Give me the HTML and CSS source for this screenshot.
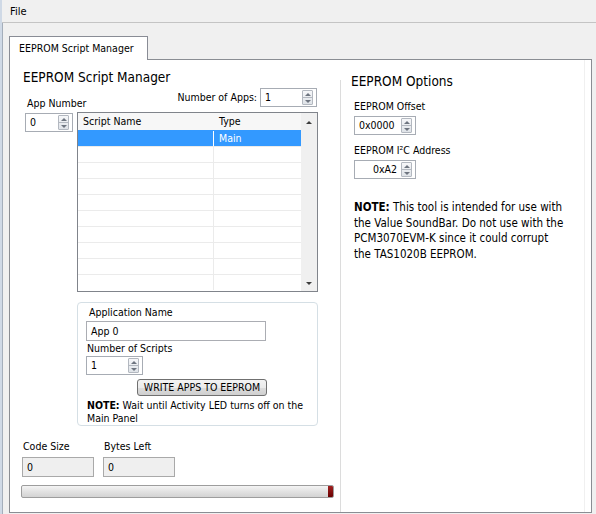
FILE: index.html
```html
<!DOCTYPE html>
<html>
<head>
<meta charset="utf-8">
<title>EEPROM Script Manager</title>
<link rel="stylesheet" href="styles.css">
</head>
<body>
<div class="window">
  <div class="menubar"><span class="menu-item">File</span></div>
  <div class="tabstrip"><div class="tab">EEPROM Script Manager</div></div>
  <div class="panel">
    <section class="left">
      <h1 class="title">EEPROM Script Manager</h1>
      <div class="top-row">
        <div class="label app-label">App Number</div>
        <div class="num-apps">
          <span class="label">Number of Apps:</span>
          <div class="spin w56"><span class="val">1</span><span class="btns"><i class="up"></i><i class="dn"></i></span></div>
        </div>
      </div>
      <div class="main-row">
        <div class="spin w48 appnum"><span class="val">0</span><span class="btns"><i class="up"></i><i class="dn"></i></span></div>
        <div class="table">
          <div class="grid">
            <div class="thead"><span class="c1">Script Name</span><span class="c2">Type</span></div>
            <div class="row sel"><span class="c1"></span><span class="c2">Main</span></div>
            <div class="row"><span class="c1"></span><span class="c2"></span></div>
            <div class="row"><span class="c1"></span><span class="c2"></span></div>
            <div class="row"><span class="c1"></span><span class="c2"></span></div>
            <div class="row"><span class="c1"></span><span class="c2"></span></div>
            <div class="row"><span class="c1"></span><span class="c2"></span></div>
            <div class="row"><span class="c1"></span><span class="c2"></span></div>
            <div class="row"><span class="c1"></span><span class="c2"></span></div>
            <div class="row"><span class="c1"></span><span class="c2"></span></div>
            <div class="row last"><span class="c1"></span><span class="c2"></span></div>
          </div>
          <div class="vscroll"><span class="arr-up"></span><span class="arr-dn"></span></div>
        </div>
      </div>
      <div class="group">
        <div class="label glabel">Application Name</div>
        <div class="textbox">App 0</div>
        <div class="label slabel">Number of Scripts</div>
        <div class="spin w57 scripts"><span class="val">1</span><span class="btns"><i class="up"></i><i class="dn"></i></span></div>
        <button class="btn">WRITE APPS TO EEPROM</button>
        <p class="gnote"><b>NOTE:</b> Wait until Activity LED turns off on the<br>Main Panel</p>
      </div>
      <div class="counts">
        <div class="count">
          <div class="label">Code Size</div>
          <div class="indicator">0</div>
        </div>
        <div class="count">
          <div class="label">Bytes Left</div>
          <div class="indicator">0</div>
        </div>
      </div>
      <div class="progress"><div class="fill"></div><div class="cap"></div></div>
    </section>
    <div class="divider"></div>
    <section class="right">
      <h2 class="opt-title">EEPROM Options</h2>
      <div class="label olabel">EEPROM Offset</div>
      <div class="spin w62 ospin"><span class="val">0x0000</span><span class="btns"><i class="up"></i><i class="dn"></i></span></div>
      <div class="label olabel second">EEPROM I²C Address</div>
      <div class="spin w62 ospin"><span class="val right-val">0xA2</span><span class="btns"><i class="up"></i><i class="dn"></i></span></div>
      <p class="onote"><b>NOTE:</b> This tool is intended for use with<br>the Value SoundBar. Do not use with the<br>PCM3070EVM-K since it could corrupt<br>the TAS1020B EEPROM.</p>
    </section>
  </div>
</div>
</body>
</html>
```

FILE: styles.css
```css
* { box-sizing: border-box; }

html, body {
  margin: 0;
  padding: 0;
}

body {
  width: 596px;
  height: 514px;
  overflow: hidden;
  background: #f0f0f0;
  font-family: "DejaVu Sans Condensed", "DejaVu Sans", sans-serif;
  font-stretch: semi-condensed;
  font-size: 10.5px;
  color: #000;
}

.window {
  height: 514px;
  border-left: 2px solid #cfd9e6;
  box-shadow: inset 1px 0 0 #a4aebb;
}

/* menu */
.menubar {
  height: 23px;
  border-bottom: 1px solid #c4c4c4;
  display: flex;
  align-items: center;
  padding-left: 8px;
  font-size: 11px;
  background: #f0f0f0;
}

/* tabs */
.tabstrip {
  height: 36px;
  padding-left: 7px;
  display: flex;
  align-items: flex-end;
}

.tab {
  width: 139px;
  height: 24px;
  margin-bottom: -1px;
  border: 1px solid #898c95;
  border-bottom: none;
  background: #fff;
  padding-left: 9px;
  line-height: 22px;
  font-size: 10.5px;
  position: relative;
  z-index: 1;
}

.panel {
  margin-left: 7px;
  width: 583px;
  height: 454px;
  border: 1px solid #8a8d93;
  background: #fff;
  display: flex;
}

.label {
  line-height: 13px;
  white-space: nowrap;
}

/* left side */
.left {
  width: 330px;
  flex: none;
}

.title {
  margin: 9px 0 0 13px;
  font-size: 13.5px;
  line-height: 16px;
  font-weight: normal;
}

.top-row {
  margin-top: 3px;
  height: 24px;
  display: flex;
  justify-content: space-between;
  align-items: flex-end;
  padding: 0 23px 0 17px;
}

.app-label {
  padding-bottom: 2px;
}

.num-apps {
  align-self: flex-start;
  display: flex;
  align-items: center;
  gap: 3px;
}

.main-row {
  display: flex;
}

/* spin boxes */
.spin {
  display: flex;
  align-items: center;
  height: 19px;
  border: 1px solid #a7acb4;
  background: #fff;
}

.spin .val {
  flex: 1;
  padding-left: 4px;
  line-height: 17px;
}

.spin .right-val {
  text-align: right;
  padding-right: 4px;
}

.spin .btns {
  width: 11px;
  height: 15px;
  margin-right: 3px;
  border: 1px solid #b3b8c0;
  border-radius: 1px;
  background: linear-gradient(#f6f7f9, #dfe3e8);
  display: flex;
  flex-direction: column;
  flex: none;
}

.btns i {
  flex: 1;
  display: flex;
  align-items: center;
  justify-content: center;
}

.btns i + i {
  border-top: 1px solid #b3b8c0;
}

.btns i::before {
  content: "";
  border-left: 3px solid transparent;
  border-right: 3px solid transparent;
}

.btns .up::before {
  border-bottom: 3px solid #6e7580;
}

.btns .dn::before {
  border-top: 3px solid #6e7580;
}

.w48 { width: 48px; }
.w56 { width: 57px; }
.w57 { width: 57px; }
.w62 { width: 62px; }

.appnum {
  margin: 1px 0 0 15px;
}

/* table */
.table {
  margin-left: 4px;
  width: 241px;
  height: 180px;
  border: 1px solid #80848b;
  display: flex;
}

.grid {
  flex: 1;
}

.thead,
.row {
  display: flex;
}

.thead {
  height: 17px;
  line-height: 16px;
  background: #f7f7f7;
}

.row {
  height: 16px;
  line-height: 15px;
  border-top: 1px solid #ebebeb;
}

.c1 {
  width: 136px;
  padding-left: 5px;
  flex: none;
}

.c2 {
  flex: 1;
  padding-left: 5px;
}

.row .c1 {
  border-right: 1px solid #ebebeb;
}

.row.sel {
  background: #3399ff;
  color: #fff;
  border-top-color: #3399ff;
}

.row.sel .c1 {
  border-right-color: #fff;
}

.vscroll {
  width: 16px;
  flex: none;
  background: #f0f0f0;
  display: flex;
  flex-direction: column;
  justify-content: space-between;
  align-items: center;
  padding: 8px 0 6px;
}

.arr-up,
.arr-dn {
  width: 0;
  height: 0;
  border-left: 3px solid transparent;
  border-right: 3px solid transparent;
}

.arr-up { border-bottom: 3px solid #3c3c3c; }
.arr-dn { border-top: 3px solid #3c3c3c; }

/* group box */
.group {
  margin: 10px 0 0 67px;
  width: 241px;
  height: 124px;
  border: 1px solid #d5dfe5;
  border-radius: 4px;
  padding-left: 8px;
}

.glabel {
  margin-top: 3px;
  padding-left: 3px;
}

.textbox {
  margin-top: 2px;
  width: 180px;
  height: 20px;
  border: 1px solid #abadb3;
  padding-left: 4px;
  line-height: 18px;
}

.slabel {
  margin-top: 1px;
  padding-left: 1px;
}

.scripts {
  margin-top: 1px;
}

.btn {
  display: block;
  margin: 4px 0 0 51px;
  width: 130px;
  height: 17px;
  padding: 0;
  border: 1px solid #707070;
  border-radius: 3px;
  background: linear-gradient(#f3f3f3 0%, #ebebeb 50%, #dddddd 51%, #cfcfcf 100%);
  font-family: inherit;
  font-stretch: inherit;
  font-size: 10.5px;
  line-height: 15px;
  color: #000;
}

.gnote {
  margin: 3px 0 0 1px;
  line-height: 13px;
  white-space: nowrap;
}

/* counts */
.counts {
  margin: 14px 0 0 12px;
  display: flex;
  gap: 9px;
}

.count .label {
  padding-left: 1px;
}

.indicator {
  margin-top: 4px;
  width: 72px;
  height: 20px;
  border: 1px solid #a9a9a9;
  background: #efefef;
  padding-left: 4px;
  line-height: 18px;
}

.progress {
  margin: 8px 0 0 11px;
  width: 313px;
  height: 13px;
  border: 1px solid #9d9d9d;
  border-radius: 2px;
  background: linear-gradient(#f4f4f4, #e2e2e2 50%, #d3d3d3);
  display: flex;
  overflow: hidden;
}

.progress .fill {
  flex: 1;
}

.progress .cap {
  width: 5px;
  background: linear-gradient(#a02020, #6a0000);
}

/* divider */
.divider {
  width: 1px;
  flex: none;
  margin-top: 20px;
  background: #dcdcdc;
}

/* right side */
.right {
  flex: 1;
  padding-left: 10px;
  margin-right: 6px;
  border-right: 1px solid #f0f0f0;
}

.opt-title {
  margin: 13px 0 0 0;
  font-size: 13.5px;
  line-height: 16px;
  font-weight: normal;
}

.olabel {
  margin-top: 11px;
  padding-left: 3px;
}

.olabel.second {
  margin-top: 9px;
}

.ospin {
  margin: 3px 0 0 3px;
}

.onote {
  margin: 21px 0 0 3px;
  font-size: 11.5px;
  line-height: 15.7px;
  white-space: nowrap;
}
```
